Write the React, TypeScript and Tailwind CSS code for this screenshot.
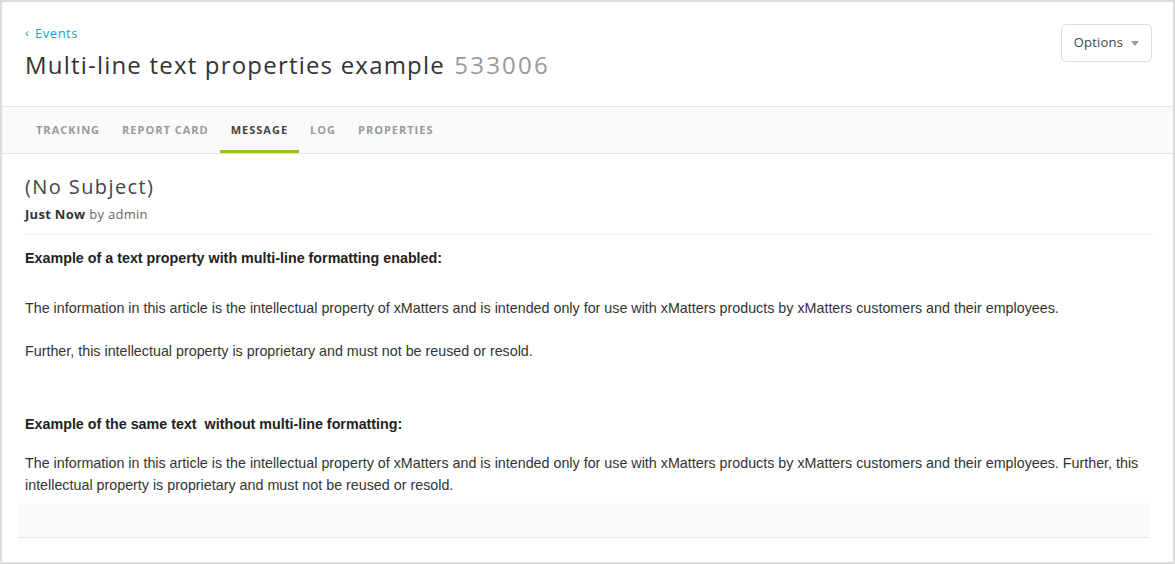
const tabs = ["Tracking", "Report Card", "Message", "Log", "Properties"];

const App = () => {
  return (
    <div className="w-[1175px] h-[564px] bg-white border-2 border-[#dcdcdc] overflow-hidden text-[#333] font-['Open_Sans',sans-serif]">
      {/* Header */}
      <div className="h-[105px] border-b border-[#e6e6e6] px-[23px] pt-[22px] flex justify-between items-start">
        <div>
          <a className="flex items-center gap-[6px] text-[13px] leading-[18px] text-[#1a9fd6] tracking-[0.5px]">
            <span className="text-[12px]">‹</span>
            <span>Events</span>
          </a>
          <h1 className="mt-[7px] text-[24px] leading-[32px] text-[#333] tracking-[1.2px]">
            Multi-line text properties example{" "}
            <span className="ml-[2px] text-[#999] tracking-[2.2px]">533006</span>
          </h1>
        </div>
        <button className="mr-[-2px] w-[91px] h-[38px] border border-[#dddddd] rounded-[5px] flex items-center justify-center gap-[8px] text-[13px] text-[#444] tracking-[0.2px]">
          Options
          <svg width="8" height="5" viewBox="0 0 8 5">
            <path d="M0 0 L8 0 L4 5 Z" fill="#999" />
          </svg>
        </button>
      </div>

      {/* Tabs */}
      <div className="h-[47px] bg-[#fafafa] border-b border-[#e6e6e6] px-[23px] flex">
        {tabs.map((t) => (
          <div
            key={t}
            className={
              t === "Message"
                ? "h-full px-[11px] flex items-center pt-[4px] border-b-[3px] border-[#95c11f] text-[11px] font-bold uppercase tracking-[1px] text-[#444] mb-[-1px]"
                : "h-full px-[11px] flex items-center pt-[1px] text-[11px] font-bold uppercase tracking-[1px] text-[#999]"
            }
          >
            {t}
          </div>
        ))}
      </div>

      {/* Message */}
      <div className="pl-[23px] pr-[20px] pt-[21px]">
        <h2 className="text-[20px] leading-[24px] text-[#444] tracking-[1.4px]">(No Subject)</h2>
        <p className="mt-[6px] text-[13px] leading-[18px] text-[#666] tracking-[0.3px]">
          <span className="font-bold text-[#333]">Just Now</span> by admin
        </p>
        <div className="mt-[11px] border-t border-[#eeeeee]" />

        <div className="font-['Liberation_Sans',Arial,sans-serif] text-[14.3px] text-[#333]">
          <p className="mt-[13px] leading-[20px] font-bold text-[#222]">
            Example of a text property with multi-line formatting enabled:
          </p>
          <p className="mt-[30px] leading-[20px]">
            The information in this article is the intellectual property of xMatters and is intended only for use with xMatters products by xMatters customers and their employees.
          </p>
          <p className="mt-[23px] leading-[20px]">
            Further, this intellectual property is proprietary and must not be reused or resold.
          </p>
          <p className="mt-[53px] leading-[20px] font-bold text-[#222]">
            Example of the same text&nbsp; without multi-line formatting:
          </p>
          <p className="mt-[18px] leading-[22px]">
            The information in this article is the intellectual property of xMatters and is intended only for use with xMatters products by xMatters customers and their employees. Further, this intellectual property is proprietary and must not be reused or resold.
          </p>
        </div>
      </div>

      {/* faded overflow footer */}
      <div className="ml-[16px] mr-[24px] mt-[7px] h-[35px] bg-[#fafafa] border-b border-[#e8e8e8]" />
    </div>
  );
};

export default App;
